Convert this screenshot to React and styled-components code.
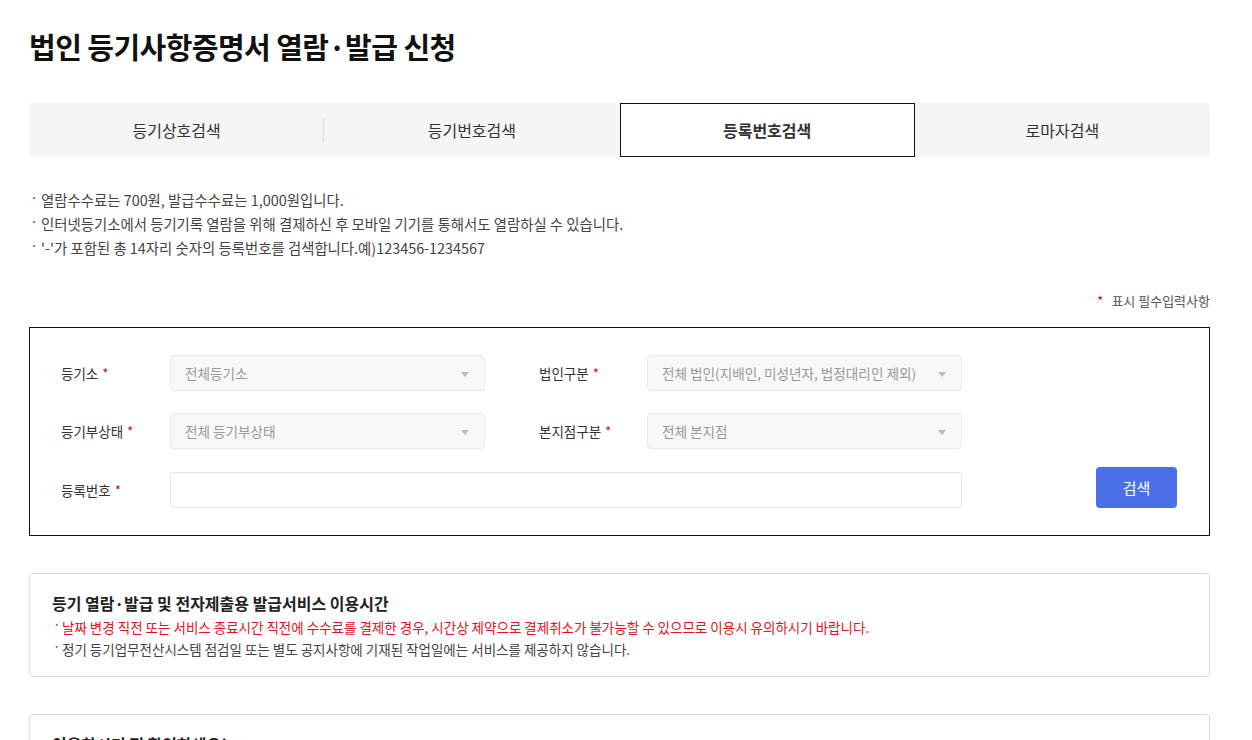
import React from 'react';
import styled, { createGlobalStyle } from 'styled-components';

const GlobalStyle = createGlobalStyle`
  * { box-sizing: border-box; }
  body {
    margin: 0;
    background: #fff;
    font-family: "Noto Sans CJK KR", "Noto Sans", sans-serif;
    color: #333;
  }
`;

const Page = styled.div`
  padding: 0 42px 0 29px;
  width: 1252px;
`;

const Title = styled.h1`
  margin: 0;
  padding-top: 26px;
  font-size: 29px;
  line-height: 40px;
  font-weight: 700;
  color: #111;
  letter-spacing: -0.55px;
`;

const Tabs = styled.ul`
  display: flex;
  list-style: none;
  margin: 37px 0 0;
  padding: 0;
  height: 54px;
  background: #f5f5f5;
  border-radius: 3px;
`;

const Tab = styled.li`
  flex: 1;
  display: flex;
  align-items: center;
  justify-content: center;
  position: relative;
  font-size: 16px;
  color: #333;
  font-weight: ${p => (p.$active ? 700 : 400)};
  background: ${p => (p.$active ? '#fff' : 'transparent')};
  border: 1px solid ${p => (p.$active ? '#111' : 'transparent')};
  &::before {
    content: '';
    display: ${p => (p.$divider ? 'block' : 'none')};
    position: absolute;
    left: -2px;
    top: 14px;
    height: 24px;
    width: 1px;
    background: #ddd;
  }
`;

const Notes = styled.ul`
  list-style: none;
  margin: ${p => (p.$tight ? '0' : '31px 0 0')};
  padding: 0;
`;

const Note = styled.li`
  position: relative;
  padding-left: ${p => (p.$small ? '10px' : '12px')};
  font-size: ${p => (p.$small ? '13.5px' : '14.4px')};
  line-height: ${p => (p.$small ? '22px' : '24px')};
  color: ${p => (p.$red ? '#e0141e' : '#444')};
  &::before {
    content: '·';
    position: absolute;
    left: 1px;
    top: -3px;
    color: #666;
  }
`;

const Required = styled.p`
  margin: 31px 0 0;
  text-align: right;
  font-size: 13px;
  line-height: 20px;
  color: #555;
`;

const Star = styled.span`
  color: #c3171e;
  margin: 0 ${p => p.$after || 4}px 0 ${p => p.$gap || 0}px;
`;

const FormBox = styled.div`
  margin-top: 16px;
  border: 1px solid #111;
  padding: 27px 32px 27px 31px;
  display: flex;
  flex-direction: column;
  gap: 22px;
`;

const Row = styled.div`
  display: flex;
  align-items: center;
  margin-top: ${p => p.$mt || 0}px;
`;

const Label = styled.label`
  width: ${p => p.$w || 109}px;
  font-size: 13.5px;
  color: #333;
  flex-shrink: 0;
`;

const Select = styled.div`
  width: 315px;
  height: 36px;
  border: 1px solid #eaeaea;
  border-radius: 4px;
  background: #f8f8f8;
  display: flex;
  align-items: center;
  justify-content: space-between;
  padding: 0 15px 0 14px;
  font-size: 13.6px;
  color: #999;
  margin-right: ${p => p.$mr || 0}px;
  white-space: nowrap;
`;

const Caret = styled.span`
  width: 0;
  height: 0;
  border-left: 4px solid transparent;
  border-right: 4px solid transparent;
  border-top: 5px solid #bbb;
  margin-top: 2px;
`;

const Input = styled.input`
  width: 792px;
  height: 36px;
  border: 1px solid #e2e2e2;
  border-radius: 4px;
  background: #fff;
  padding: 0 14px;
  font-size: 14px;
  font-family: inherit;
`;

const SearchButton = styled.button`
  margin-left: auto;
  margin-top: -5px;
  align-self: flex-end;
  width: 81px;
  height: 41px;
  border: none;
  border-radius: 4px;
  background: #4b6fe6;
  color: #fff;
  font-size: 15px;
  font-family: inherit;
`;

const InfoBox = styled.div`
  margin-top: 37px;
  border: 1px solid #dcdcdc;
  border-radius: 4px;
  padding: 17px 22px 16px;
`;

const InfoTitle = styled.h3`
  margin: 0 0 1px;
  font-size: 16px;
  line-height: 24px;
  font-weight: 700;
  color: #222;
`;

const NextBox = styled(InfoBox)`
  border-bottom: none;
  border-radius: 4px 4px 0 0;
  height: 40px;
`;

const Field = ({ label, value, w, mr }) => (
  <>
    <Label $w={w}>
      {label}
      <Star $gap={4}>*</Star>
    </Label>
    <Select $mr={mr}>
      {value}
      <Caret />
    </Select>
  </>
);

export default function App() {
  return (
    <>
      <GlobalStyle />
      <Page>
        <Title>법인 등기사항증명서 열람·발급 신청</Title>
        <Tabs>
          <Tab>등기상호검색</Tab>
          <Tab $divider>등기번호검색</Tab>
          <Tab $active>등록번호검색</Tab>
          <Tab>로마자검색</Tab>
        </Tabs>
        <Notes>
          <Note>열람수수료는 700원, 발급수수료는 1,000원입니다.</Note>
          <Note>인터넷등기소에서 등기기록 열람을 위해 결제하신 후 모바일 기기를 통해서도 열람하실 수 있습니다.</Note>
          <Note>'-'가 포함된 총 14자리 숫자의 등록번호를 검색합니다.예)123456-1234567</Note>
        </Notes>
        <Required>
          <Star $gap={0} $after={8}>*</Star>표시 필수입력사항
        </Required>
        <FormBox>
          <Row>
            <Field label="등기소" value="전체등기소" mr={54} />
            <Field label="법인구분" value="전체 법인(지배인, 미성년자, 법정대리인 제외)" w={108} />
          </Row>
          <Row>
            <Field label="등기부상태" value="전체 등기부상태" mr={54} />
            <Field label="본지점구분" value="전체 본지점" w={108} />
          </Row>
          <Row $mt={1}>
            <Label>
              등록번호<Star $gap={4}>*</Star>
            </Label>
            <Input />
            <SearchButton>검색</SearchButton>
          </Row>
        </FormBox>
        <InfoBox>
          <InfoTitle>등기 열람·발급 및 전자제출용 발급서비스 이용시간</InfoTitle>
          <Notes $tight>
            <Note $small $red>날짜 변경 직전 또는 서비스 종료시간 직전에 수수료를 결제한 경우, 시간상 제약으로 결제취소가 불가능할 수 있으므로 이용시 유의하시기 바랍니다.</Note>
            <Note $small>정기 등기업무전산시스템 점검일 또는 별도 공지사항에 기재된 작업일에는 서비스를 제공하지 않습니다.</Note>
          </Notes>
        </InfoBox>
        <NextBox>
          <InfoTitle>이용하시기 전 확인하세요!</InfoTitle>
        </NextBox>
      </Page>
    </>
  );
}
